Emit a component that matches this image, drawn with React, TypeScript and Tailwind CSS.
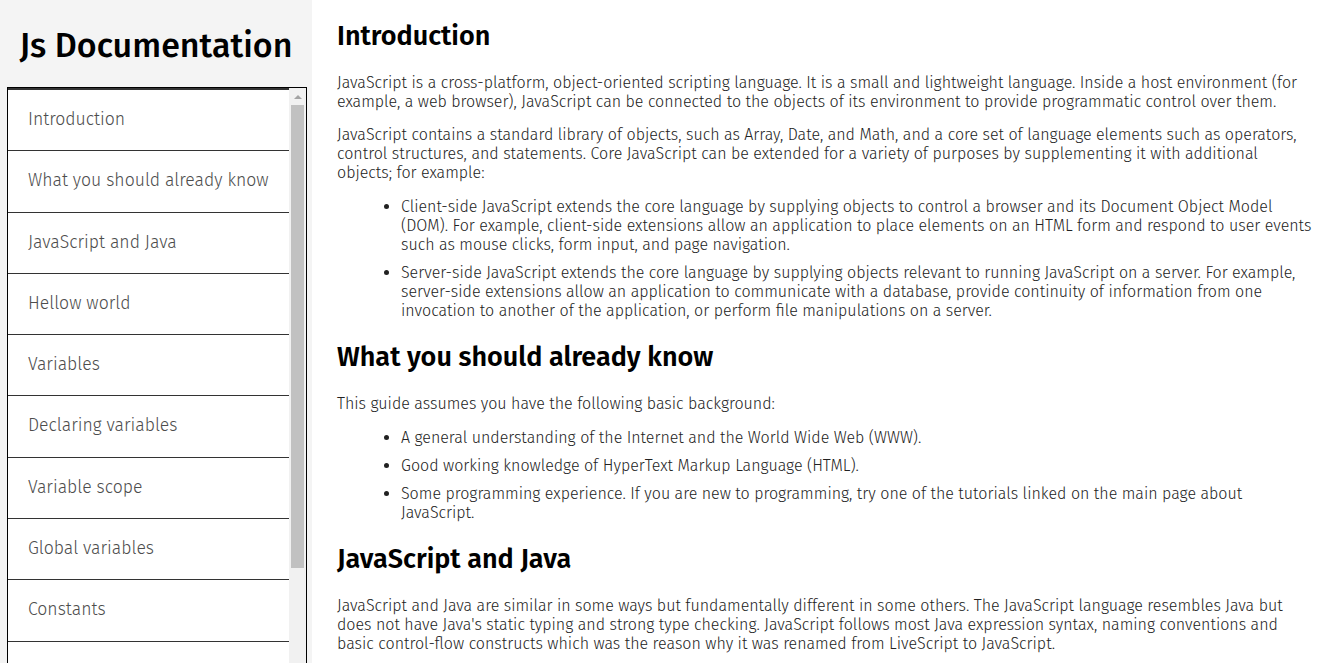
const navItems = [
  "Introduction",
  "What you should already know",
  "JavaScript and Java",
  "Hellow world",
  "Variables",
  "Declaring variables",
  "Variable scope",
  "Global variables",
  "Constants",
  "Data types",
  "if...else statement",
  "while statement",
  "Function declarations",
  "Reference",
];

const Sidebar = () => {
  return (
    <nav className="w-[312px] shrink-0 bg-[#f4f4f4] h-full flex flex-col">
      <header className="pt-[26px] pb-[21px] text-center text-[34px] leading-[40px] font-medium text-black">
        Js Documentation
      </header>
      <div className="ml-[7px] w-[300px] h-[640px] shrink-0 border border-black bg-white flex">
        <ul className="flex-1 min-w-0 overflow-hidden border-t-2 border-[#333]">
          {navItems.map((item) => (
            <li key={item} className="border-b border-[#333]">
              <a className="flex items-center h-[60.3px] pl-[20px] text-[17.6px] font-light text-[#4d4d4d]">
                {item}
              </a>
            </li>
          ))}
        </ul>
        {/* scrollbar */}
        <div className="w-[17px] shrink-0 bg-[#f1f1f1] flex flex-col">
          <div className="h-[17px] flex items-center justify-center">
            <div className="w-0 h-0 border-x-[4px] border-x-transparent border-b-[4px] border-b-[#a3a3a3]" />
          </div>
          <div className="mx-[2px] h-[463px] bg-[#c1c1c1]" />
        </div>
      </div>
    </nav>
  );
};

const Section = ({ title, first, children }: { title: string; first?: boolean; children: React.ReactNode }) => {
  return (
    <section>
      <h2 className={`${first ? "mt-[20px]" : "mt-[21px]"} mb-[21px] text-[27px] leading-[32px] font-semibold text-black`}>
        {title}
      </h2>
      {children}
    </section>
  );
};

const Para = ({ children }: { children: React.ReactNode }) => (
  <p className="mb-[14px] last:mb-0">{children}</p>
);

const Bullets = ({ items }: { items: string[] }) => (
  <ul className="mt-[15px] pl-[64px] list-disc flex flex-col gap-[9px]">
    {items.map((t) => (
      <li key={t}>{t}</li>
    ))}
  </ul>
);

export default function App() {
  return (
    <div className="flex h-screen overflow-hidden font-['Fira_Sans','Open_Sans',sans-serif]">
      <Sidebar />
      <main className="flex-1 min-w-0 overflow-hidden px-[25px] text-[16px] leading-[19px] font-light text-[#222]">
        <Section title="Introduction" first>
          <Para>
            JavaScript is a cross-platform, object-oriented scripting language. It is a small and lightweight
            language. Inside a host environment (for example, a web browser), JavaScript can be connected to the
            objects of its environment to provide programmatic control over them.
          </Para>
          <Para>
            JavaScript contains a standard library of objects, such as Array, Date, and Math, and a core set of
            language elements such as operators, control structures, and statements. Core JavaScript can be extended
            for a variety of purposes by supplementing it with additional objects; for example:
          </Para>
          <Bullets
            items={[
              "Client-side JavaScript extends the core language by supplying objects to control a browser and its Document Object Model (DOM). For example, client-side extensions allow an application to place elements on an HTML form and respond to user events such as mouse clicks, form input, and page navigation.",
              "Server-side JavaScript extends the core language by supplying objects relevant to running JavaScript on a server. For example, server-side extensions allow an application to communicate with a database, provide continuity of information from one invocation to another of the application, or perform file manipulations on a server.",
            ]}
          />
        </Section>
        <Section title="What you should already know">
          <Para>This guide assumes you have the following basic background:</Para>
          <Bullets
            items={[
              "A general understanding of the Internet and the World Wide Web (WWW).",
              "Good working knowledge of HyperText Markup Language (HTML).",
              "Some programming experience. If you are new to programming, try one of the tutorials linked on the main page about JavaScript.",
            ]}
          />
        </Section>
        <Section title="JavaScript and Java">
          <Para>
            JavaScript and Java are similar in some ways but fundamentally different in some others. The JavaScript
            language resembles Java but does not have Java's static typing and strong type checking. JavaScript
            follows most Java expression syntax, naming conventions and basic control-flow constructs which was the
            reason why it was renamed from LiveScript to JavaScript.
          </Para>
          <Para>
            In contrast to Java's compile-time system of classes built by declarations, JavaScript supports a runtime
            system based on a small number of data types representing numeric, Boolean, and string values.
          </Para>
        </Section>
      </main>
    </div>
  );
}
